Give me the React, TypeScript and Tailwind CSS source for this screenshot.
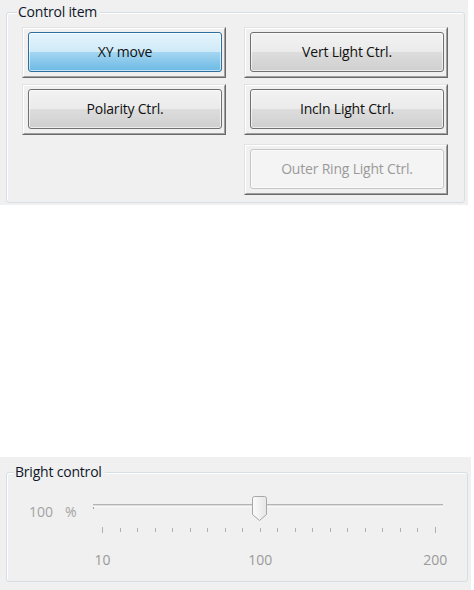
import React from "react";

type BtnKind = "normal" | "active" | "disabled";

function FrameButton({ label, kind }: { label: string; kind: BtnKind }) {
  const inner =
    kind === "active"
      ? "border-[#2f6f9f] bg-[linear-gradient(to_bottom,#e5f4fc_0%,#cfeaf8_50%,#a5d6f2_50%,#6cb9e4_100%)] text-[#111]"
      : kind === "disabled"
      ? "border-[#c3c7ca] bg-[#f4f4f4] text-[#9a9a9a]"
      : "border-[#707070] bg-[linear-gradient(to_bottom,#f2f2f2_0%,#ebebeb_50%,#dddddd_50%,#cfcfcf_100%)] text-[#111]";
  return (
    <div className="w-[204px] h-[51px] border border-t-[#e3e3e3] border-l-[#e3e3e3] border-r-[#696969] border-b-[#696969]">
      <div className="w-full h-full border border-t-white border-l-white border-r-[#a0a0a0] border-b-[#a0a0a0] pl-[4px] pt-[3px]">
        <div
          className={`w-[194px] h-[40px] rounded-[3px] border flex items-center justify-center shadow-[inset_0_0_0_1px_rgba(255,255,255,0.6)] ${inner}`}
        >
          <span className="text-[14px] leading-none tracking-[-0.2px]">{label}</span>
        </div>
      </div>
    </div>
  );
}

function Thumb() {
  return (
    <svg width="15" height="25" viewBox="0 0 15 25">
      <defs>
        <linearGradient id="tg" x1="0" y1="0" x2="1" y2="0">
          <stop offset="0" stopColor="#fbfbfb" />
          <stop offset="1" stopColor="#e6e6e6" />
        </linearGradient>
      </defs>
      <path
        d="M2.5 0.5 H12.5 Q14.5 0.5 14.5 2.5 V18.5 L7.5 24.5 L0.5 18.5 V2.5 Q0.5 0.5 2.5 0.5 Z"
        fill="url(#tg)"
        stroke="#a7a7a7"
      />
    </svg>
  );
}

export default function App() {
  const ticks = Array.from({ length: 20 }, (_, i) => i);
  const labels: Record<number, string> = { 0: "10", 9: "100", 19: "200" };
  return (
    <div
      className="w-[474px] h-[590px] bg-white text-[14px]"
      style={{ fontFamily: '"Open Sans", "Noto Sans", sans-serif' }}
    >
      {/* Top panel */}
      <div className="w-[468px] h-[205px] bg-[#f0f0f0] pt-[12px] pl-[6px]">
        <div className="relative w-[459px] h-[191px] rounded-[3px] border border-[#d5dfe5] shadow-[inset_1px_1px_0_#ffffff]">
          <span className="absolute -top-[10px] left-[10px] bg-[#f0f0f0] pr-[3px] pl-[1px] leading-[18px] text-[#0f172a] tracking-[-0.2px]">
            Control item
          </span>
          <div className="pl-[15px] pt-[14px] flex flex-col">
            <div className="flex gap-[18px]">
              <FrameButton label="XY move" kind="active" />
              <FrameButton label="Vert Light Ctrl." kind="normal" />
            </div>
            <div className="flex gap-[18px] mt-[6px]">
              <FrameButton label="Polarity Ctrl." kind="normal" />
              <FrameButton label="Incln Light Ctrl." kind="normal" />
            </div>
            <div className="flex mt-[9px] pl-[222px]">
              <FrameButton label="Outer Ring Light Ctrl." kind="disabled" />
            </div>
          </div>
        </div>
      </div>

      {/* spacer */}
      <div className="h-[252px]" />

      {/* Bottom panel */}
      <div className="w-[471px] h-[133px] bg-[#f0f0f0] pt-[15px] pl-[6px]">
        <div className="relative w-[462px] h-[110px] rounded-[3px] border border-[#d5dfe5] shadow-[inset_1px_1px_0_#ffffff]">
          <span className="absolute -top-[10px] left-[7px] bg-[#f0f0f0] pr-[3px] pl-[1px] leading-[18px] text-[#0f172a] tracking-[-0.2px]">
            Bright control
          </span>
          <div className="flex pt-[23px]">
            <div className="flex items-center h-[30px] pl-[22px] w-[86px] text-[#a3a3a3] text-[14px]">
              <span>100</span>
              <span className="ml-[12px]">%</span>
            </div>
            <div className="w-[350px] flex flex-col">
              <div className="relative h-[30px]">
                <div className="absolute left-0 top-[8px] w-[1px] h-[5px] bg-[#a0a0a0]" />
                <div className="absolute left-0 right-0 top-[8px] h-[3px] border-t border-[#b4b4b4] bg-[#dcdcdc] border-b border-b-[#fafafa]" />
                <div className="absolute left-[159px] top-0">
                  <Thumb />
                </div>
              </div>
              <div className="flex justify-between pl-[9px] pr-[7px] mt-[1px] h-[6px]">
                {ticks.map((i) => (
                  <div
                    key={i}
                    className={`w-[1px] bg-[#b0b0b0] ${i === 0 || i === 19 ? "h-[6px]" : "h-[4px] mt-[1px]"}`}
                  />
                ))}
              </div>
              <div className="flex justify-between pl-[9px] pr-[7px] mt-[19px]">
                {ticks.map((i) => (
                  <div key={i} className="w-[1px] flex justify-center">
                    {labels[i] ? (
                      <span className="text-[14px] text-[#9a9a9a] leading-[16px] whitespace-nowrap">
                        {labels[i]}
                      </span>
                    ) : null}
                  </div>
                ))}
              </div>
            </div>
          </div>
        </div>
      </div>
    </div>
  );
}
